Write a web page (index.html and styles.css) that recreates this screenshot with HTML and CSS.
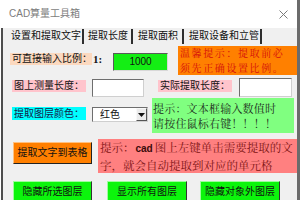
FILE: index.html
```html
<!DOCTYPE html>
<html lang="zh-CN">
<head>
<meta charset="utf-8">
<title>CAD算量工具箱</title>
<link rel="stylesheet" href="styles.css">
</head>
<body>
<div class="window">
  <div class="main">
    <div class="titlebar">
      <span class="title">CAD算量工具箱</span>
      <svg class="close" width="9" height="9" viewBox="0 0 9 9"><path d="M0.5 0.5L8.5 8.5M8.5 0.5L0.5 8.5" stroke="#7a7a7a" stroke-width="1"/></svg>
    </div>
    <div class="client">
      <div class="tabs">
        <div class="tab tab-1">设置和提取文字</div>
        <div class="tab tab-2">提取长度</div>
        <div class="tab tab-3">提取面积</div>
        <div class="tab tab-4">提取设备和立管</div>
      </div>
      <div class="panel">
        <div class="row row-a">
          <div class="label peach l-scale">可直接输入比例：</div>
          <div class="ratio">1:</div>
          <div class="green-field">1000</div>
          <div class="hint hint-orange"><span class="hline">温馨提示：提取前必</span><span class="hline">须先正确设置比例。</span></div>
        </div>
        <div class="row row-b">
          <div class="label pink l-measure">图上测量长度：</div>
          <div class="input input-1"></div>
          <div class="label pink l-actual">实际提取长度：</div>
          <div class="input input-2"></div>
        </div>
        <div class="row row-c">
          <div class="label cyan l-color">提取图层颜色：</div>
          <div class="select">
            <span class="select-text">红色</span>
            <span class="select-arrow"><svg width="7" height="4" viewBox="0 0 7 4"><path d="M0 0H7L3.5 4Z" fill="#111"/></svg></span>
          </div>
          <div class="hint hint-green">提示：文本框输入数值时<br>请按住鼠标右键！！！！</div>
        </div>
        <div class="row row-d">
          <div class="btn btn-orange btn-extract">提取文字到表格</div>
          <div class="hint hint-pink">提示：<b class="latin">cad</b>图上左键单击需要提取的文<br>字，就会自动提取到对应的单元格</div>
        </div>
        <div class="row row-e">
          <div class="btn btn-green btn-hide">隐藏所选图层</div>
          <div class="btn btn-green btn-show">显示所有图层</div>
          <div class="btn btn-green btn-hide-other">隐藏对象外图层</div>
        </div>
      </div>
    </div>
  </div>
  <div class="edge"></div>
</div>
</body>
</html>
```
FILE: styles.css
```css
html, body {
  margin: 0;
  padding: 0;
  background: #ffffff;
}

.window {
  width: 300px;
  height: 200px;
  display: flex;
  overflow: hidden;
  font-family: "Liberation Sans", "Noto Sans CJK SC", sans-serif;
  font-size: 10px;
  color: #111;
}

.main {
  width: 297px;
  display: flex;
  flex-direction: column;
  background: #ffffff;
}

.edge {
  width: 3px;
  background: #6b6b6b;
}

.titlebar {
  height: 28px;
  flex: none;
  display: flex;
  align-items: center;
  justify-content: space-between;
  padding: 0 9px;
  background: #ffffff;
}

.title {
  font-size: 10px;
  line-height: 28px;
  color: #7d7d7d;
}

.close {
  display: block;
}

.client {
  flex: 1;
  margin-left: 1px;
  border-left: 2px solid #4d4d4d;
  background: #f0f0f0;
  display: flex;
  flex-direction: column;
  overflow: hidden;
}

.tabs {
  height: 18px;
  flex: none;
  display: flex;
  align-items: flex-start;
}

.tab {
  margin-top: 1px;
  height: 15px;
  line-height: 14px;
  font-size: 10px;
  color: #111;
  border-right: 2px solid #2e2e2e;
  white-space: nowrap;
}

.tab-1 { padding: 0 1px 0 8px; }
.tab-2 { padding: 0 3px 0 4px; }
.tab-3 { padding: 0 4px 0 5px; }
.tab-4 { padding: 0 1px 0 5px; }

.panel {
  flex: 1;
  display: flex;
  flex-direction: column;
}

.row {
  display: flex;
  align-items: flex-start;
  flex: none;
}

.row-a { height: 29px; }
.row-b { height: 22px; }
.row-c { height: 35px; margin-top: 1px; }
.row-d { height: 40px; }
.row-e { margin-top: 8px; }

.label {
  box-sizing: border-box;
  height: 12px;
  padding-left: 2px;
  font-size: 10px;
  line-height: 12px;
  white-space: nowrap;
  overflow: hidden;
}

.peach { background: #fcd9bf; }
.pink { background: #ffc4cc; }
.cyan { background: #00ffff; color: #14204a; }

.l-scale { margin: 7px 0 0 7px; width: 82px; }
.l-measure { margin: 5px 0 0 9px; width: 74px; }
.l-actual { margin: 5px 0 0 14px; width: 74px; }
.l-color { margin: 9px 0 0 9px; width: 74px; height: 13px; line-height: 13px; }

.ratio {
  margin: 6px 0 0 1px;
  width: 10px;
  font-family: "Liberation Serif", serif;
  font-weight: bold;
  font-size: 11px;
  line-height: 14px;
}

.green-field {
  box-sizing: border-box;
  margin: 7px 0 0 10px;
  width: 55px;
  height: 18px;
  background: #14ee14;
  border: 1px solid;
  border-color: #5a5a5a #d8d8d8 #d8d8d8 #5a5a5a;
  text-align: center;
  font-size: 10px;
  line-height: 16px;
}

.input {
  box-sizing: border-box;
  background: #ffffff;
  border: 1px solid;
  border-color: #6e6e6e #cfcfcf #cfcfcf #6e6e6e;
}

.input-1 { margin: 4px 0 0 6px; width: 52px; height: 18px; }
.input-2 { margin: 3px 0 0 7px; width: 53px; height: 19px; }

.select {
  box-sizing: border-box;
  margin: 9px 0 0 6px;
  width: 56px;
  height: 15px;
  display: flex;
  background: #ffffff;
  border: 1px solid;
  border-color: #6e6e6e #cfcfcf #cfcfcf #6e6e6e;
}

.select-text {
  flex: 1;
  padding-left: 7px;
  font-size: 10px;
  line-height: 13px;
}

.select-arrow {
  box-sizing: border-box;
  width: 11px;
  display: flex;
  align-items: center;
  justify-content: center;
  background: #ececec;
  border: 1px solid;
  border-color: #f8f8f8 #555 #555 #f8f8f8;
}

.select-arrow svg { display: block; }

.hint {
  box-sizing: border-box;
  white-space: nowrap;
  overflow: hidden;
  font-family: "Noto Serif CJK SC", "Noto Sans CJK SC", serif;
}

.hint-orange {
  margin: 0 0 0 10px;
  width: 119px;
  height: 29px;
  padding: 0 0 0 2px;
  background: #ff8000;
  color: #d40c0c;
  font-size: 10px;
  letter-spacing: 1.6px;
  line-height: 14.5px;
  display: flex;
  flex-direction: column;
}

.hline {
  display: block;
  height: 14.5px;
}

.hint-green {
  margin: 0 0 0 4px;
  width: 142px;
  height: 35px;
  padding: 3px 0 0 1px;
  background: #80ff80;
  color: #1c2c1c;
  font-size: 11px;
  letter-spacing: 0.2px;
  line-height: 15px;
}

.hint-pink {
  margin: 6px 0 0 6px;
  width: 199px;
  height: 34px;
  padding: 0 0 0 2px;
  background: #ff8080;
  color: #7e1414;
  font-size: 11.5px;
  line-height: 16px;
}

.latin {
  font-family: "Liberation Sans", sans-serif;
  font-size: 10px;
  font-weight: bold;
  color: #3a0a0a;
  margin: 0 2px 0 1px;
}

.btn {
  box-sizing: border-box;
  height: 22px;
  text-align: center;
  font-size: 10px;
  line-height: 20px;
  white-space: nowrap;
  border: 1px solid;
}

.btn-orange {
  background: #ff7f00;
  border-color: #ffc080 #222 #222 #ffc080;
}

.btn-green {
  background: #0cf50c;
  border-color: #9cff9c #333 #333 #9cff9c;
}

.btn-extract { margin: 9px 0 0 10px; width: 79px; }
.btn-hide { margin-left: 10px; width: 79px; }
.btn-show { margin-left: 15px; width: 80px; }
.btn-hide-other { margin-left: 13px; width: 80px; }
```
